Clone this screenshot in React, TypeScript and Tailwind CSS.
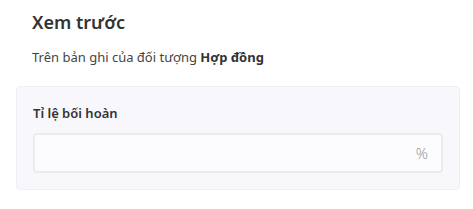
export default function App() {
  return (
    <div className="w-[473px] h-[209px] bg-white px-4 pt-[9px] font-['Noto_Sans',sans-serif]">
      <div className="px-4">
        <h2 className="text-[18px] leading-[26px] font-semibold text-[#333333]">Xem trước</h2>
        <p className="mt-[13px] text-[13px] leading-[18px] text-[#444444]">
          Trên bản ghi của đối tượng <span className="font-bold text-[#333333]">Hợp đồng</span>
        </p>
      </div>
      <div className="mt-[20px] w-[444px] h-[104px] rounded-[4px] border border-[#eeeef6] bg-[#f8f8fc] px-4 pt-[17px]">
        <label className="block text-[13px] leading-[18px] font-semibold text-[#333333]">Tỉ lệ bối hoàn</label>
        <div className="mt-[11px] flex h-[40px] w-[410px] items-center justify-end rounded-[4px] border-2 border-[#ebebf0] bg-[#fcfcfe] pr-[13px]">
          <span className="text-[15px] font-light text-[#999999]">%</span>
        </div>
      </div>
    </div>
  );
}
